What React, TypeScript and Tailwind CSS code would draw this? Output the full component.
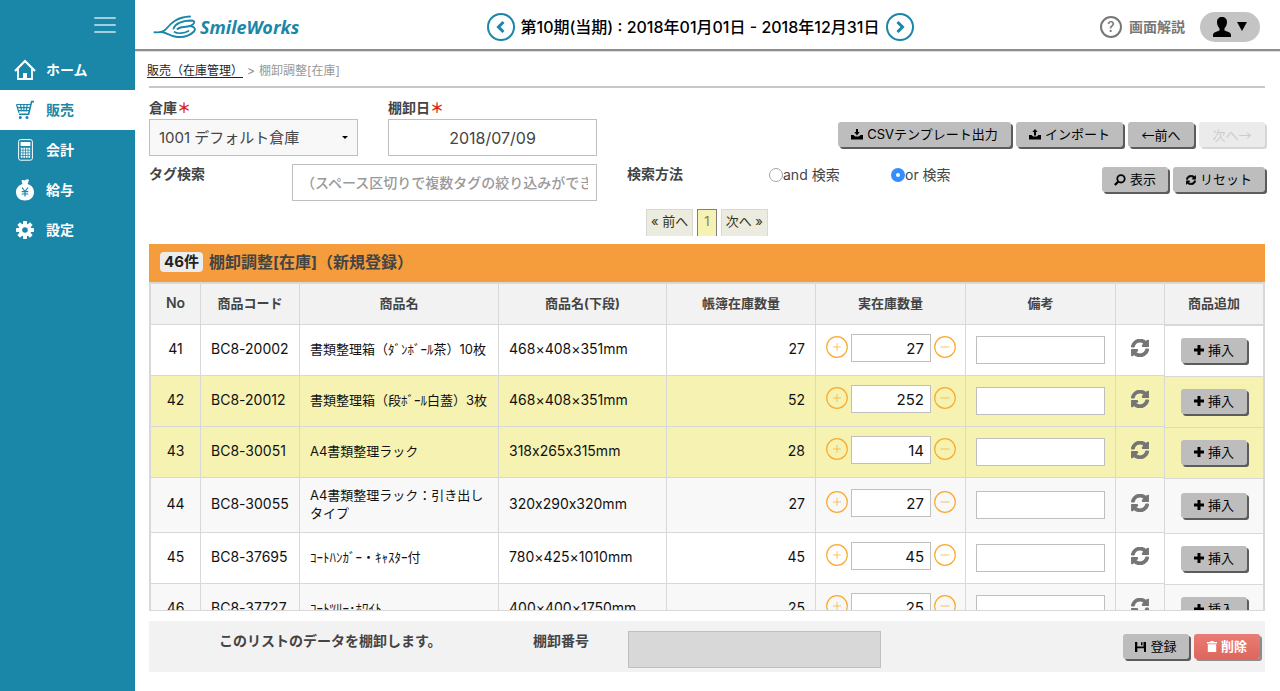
import React from "react";
import { FaSyncAlt } from "react-icons/fa";

type Row = {
  no: number;
  code: string;
  name: string;
  sub: string;
  book: number;
  real: number;
  rowClass: string;
};

const ROWS: Row[] = [
  { no: 41, code: "BC8-20002", name: "書類整理箱（ﾀﾞﾝﾎﾞｰﾙ茶）10枚", sub: "468×408×351mm", book: 27, real: 27, rowClass: "bg-white" },
  { no: 42, code: "BC8-20012", name: "書類整理箱（段ﾎﾞｰﾙ白蓋）3枚", sub: "468×408×351mm", book: 52, real: 252, rowClass: "bg-[#f6f2b2]" },
  { no: 43, code: "BC8-30051", name: "A4書類整理ラック", sub: "318x265x315mm", book: 28, real: 14, rowClass: "bg-[#f6f2b2]" },
  { no: 44, code: "BC8-30055", name: "A4書類整理ラック：引き出しタイプ", sub: "320x290x320mm", book: 27, real: 27, rowClass: "bg-[#f8f8f8]" },
  { no: 45, code: "BC8-37695", name: "ｺｰﾄﾊﾝｶﾞｰ・ｷｬｽﾀｰ付", sub: "780×425×1010mm", book: 45, real: 45, rowClass: "bg-white" },
  { no: 46, code: "BC8-37727", name: "ｺｰﾄﾂﾘｰ･ﾎﾜｲﾄ", sub: "400×400×1750mm", book: 25, real: 25, rowClass: "bg-[#f8f8f8]" },
];

function HomeIcon() {
  return (
    <svg viewBox="0 0 22 22" className="w-[22px] h-[22px]" fill="none" stroke="currentColor" strokeWidth="1.8">
      <path d="M1 12 11 2l10 10" strokeWidth="2.2" />
      <path d="M4 10v10h14V10" />
      <path d="M9 20v-6h4v6z" fill="currentColor" stroke="none" />
    </svg>
  );
}

function CartIcon() {
  return (
    <svg viewBox="0 0 20 20" className="w-5 h-5" fill="none" stroke="currentColor" strokeWidth="1.2">
      <path d="M19 1.600h-2.400L13.600 14.300H4" strokeWidth="1.600" />
      <path d="M1.500 4.500h14M2.300 7.600h12.400M3 10.700h11M1.500 4.500 4 12.800M5.500 4.500l1 7M8.900 4.500v7M12.200 4.500l-1 7" />
      <circle cx="5.300" cy="17.600" r="1.500" fill="currentColor" stroke="none" />
      <circle cx="12" cy="17.600" r="1.500" fill="currentColor" stroke="none" />
    </svg>
  );
}

function CalculatorIcon() {
  return (
    <svg viewBox="0 0 15 22" className="w-[15px] h-[22px]" fill="none" stroke="currentColor">
      <rect x="0.6" y="0.6" width="13.8" height="20.6" rx="2" />
      <rect x="2.6" y="3" width="9.8" height="4" fill="currentColor" stroke="none" />
      <path d="M2.800 9.800h9.400M2.800 12.500h9.400M2.800 15.200h9.400M2.800 17.900h9.400" strokeWidth="1.9" strokeDasharray="1.75 0.8" />
    </svg>
  );
}

function MoneyBagIcon() {
  return (
    <svg viewBox="0 0 18 22" className="w-[18px] h-[22px]">
      <path
        fill="currentColor"
        d="M5.500 1.500C7 .3 7.600 1.700 9 1.200 10.600.500 11.800-.2 13 .9L11.600 5C15.500 6.300 18 9.300 18 13c0 5-3.700 8.500-9 8.500S0 18 0 13c0-3.700 2.600-6.700 6.400-8z"
      />
      <path d="m6 8.500 3 4 3-4M9 12.500v5M5.700 12.700h6.600M5.700 15h6.600" fill="none" stroke="#1a87a9" strokeWidth="1.2" />
    </svg>
  );
}

function GearIcon() {
  return (
    <svg viewBox="-10 -10 20 20" className="w-5 h-5">
      {[0, 45, 90, 135].map((deg) => (
        <rect key={deg} x="-2" y="-9" width="4" height="18" rx="0.8" fill="currentColor" transform={`rotate(${deg})`} />
      ))}
      <circle r="6.400" fill="currentColor" />
      <circle r="2.800" fill="#1a87a9" />
    </svg>
  );
}

function TrayIcon({ up = false }: { up?: boolean }) {
  return (
    <svg viewBox="0 0 12 11" className="w-3 h-[11px]" fill="currentColor">
      <path d="M0 6h2.500l1.700 1.600h3.600L9.500 6H12v4.500H0z" />
      {up ? <path d="M6 0l2.700 3H7v3.500H5V3H3.300z" /> : <path d="M5 0h2v3h1.700L6 6.500 3.300 3H5z" />}
    </svg>
  );
}

function SearchIcon() {
  return (
    <svg viewBox="0 0 12 12" className="w-3 h-3" fill="none" stroke="currentColor" strokeWidth="1.8">
      <circle cx="7" cy="4.800" r="3.700" />
      <path d="M4.300 7.500.9 11" strokeWidth="2.400" />
    </svg>
  );
}

function PlusIcon() {
  return (
    <svg viewBox="0 0 10 10" className="w-2.5 h-2.5" fill="currentColor">
      <path d="M3.500 0h3v3.500H10v3H6.500V10h-3V6.500H0v-3h3.500z" />
    </svg>
  );
}

function SaveIcon() {
  return (
    <svg viewBox="0 0 11 10" className="w-[11px] h-2.5" fill="currentColor">
      <path d="M0 0h2.300v4.500h6.200V0H11v10H9V6.300H2.300V10H0z" />
      <path d="M6 .3h1.500v3H6z" />
    </svg>
  );
}

function TrashIcon() {
  return (
    <svg viewBox="0 0 10 11" className="w-2.5 h-[11px]" fill="currentColor">
      <path d="M3.300 0h3.400v1H10v1.500H0V1h3.300zM.8 3.200h8.400V11H.8z" />
    </svg>
  );
}

function Logo() {
  return (
    <a href="#" className="flex items-center gap-[3px] ml-[13px] text-[#1a87a9]">
      <svg viewBox="0 0 44 24" className="w-11 h-6" fill="none" stroke="currentColor" strokeLinecap="round">
        <path d="M1.500 17.300c5 .4 8.500.2 11.500-3.300C18 8 24 2 37 1.500" strokeWidth="1.900" />
        <path d="M20.500 13.500c2-5 8-7.700 18-8 4.500 0 3 4-1.500 5.500-5 1.500-10 .5-12.500 3" strokeWidth="1.900" />
        <path d="M8 17c4-.5 8 3.800 15 4.800 8 1 14-1.300 18-5.300 2-2.500.5-5-4-5.500" strokeWidth="1.900" />
        <path d="M21.500 17c3 2 9.500 1.500 14-1" strokeWidth="1.700" />
      </svg>
      <span className="font-['Noto_Sans','Open_Sans',sans-serif] text-lg leading-6 font-bold italic">SmileWorks</span>
    </a>
  );
}

const MENU = [
  { label: "ホーム", icon: <HomeIcon /> },
  { label: "販売", icon: <CartIcon />, active: true },
  { label: "会計", icon: <CalculatorIcon /> },
  { label: "給与", icon: <MoneyBagIcon /> },
  { label: "設定", icon: <GearIcon /> },
];

function Sidebar() {
  return (
    <nav className="w-[135px] shrink-0 bg-[#1a87a9] text-white">
      <div className="h-[50px] flex justify-end items-center pr-[19px]">
        <button type="button" aria-label="メニュー" className="flex flex-col gap-[5px]">
          <span className="block w-[22px] h-0.5 rounded bg-white/60" />
          <span className="block w-[22px] h-0.5 rounded bg-white/60" />
          <span className="block w-[22px] h-0.5 rounded bg-white/60" />
        </button>
      </div>
      {MENU.map((m) => (
        <a
          key={m.label}
          href="#"
          className={`h-10 flex items-center pl-3 text-sm font-bold ${m.active ? "bg-white text-[#1a87a9]" : ""}`}
        >
          <span className="w-[34px] pr-2 flex justify-center">{m.icon}</span>
          {m.label}
        </a>
      ))}
    </nav>
  );
}

function ArrowButton({ label, path }: { label: string; path: string }) {
  return (
    <button type="button" aria-label={label} className="w-7 h-7 rounded-full border-2 border-[#1a87a9] text-[#1a87a9] flex items-center justify-center">
      <svg viewBox="0 0 12 14" className="w-3 h-3.5" fill="none" stroke="currentColor" strokeWidth="3">
        <path d={path} />
      </svg>
    </button>
  );
}

function Header() {
  return (
    <header className="h-[51px] shrink-0 flex items-center justify-between pl-[5px] pr-5 pt-1 border-b-2 border-[#8e8e8e] shadow-[0_1px_0_#dddddd]">
      <div className="flex-1">
        <Logo />
      </div>
      <div className="flex items-center gap-1.5 text-base font-medium text-black whitespace-nowrap">
        <ArrowButton label="前の期" path="M8.500 2 3.500 7l5 5" />
        <span>第10期(当期) : 2018年01月01日 - 2018年12月31日</span>
        <ArrowButton label="次の期" path="m3.500 2 5 5-5 5" />
      </div>
      <div className="flex-1 flex items-center justify-end">
        <a href="#" className="flex items-center gap-[7px] text-sm font-bold text-[#777777]">
          <span className="w-[22px] h-[22px] rounded-full border-2 border-[#777777] flex items-center justify-center text-sm leading-none font-medium">?</span>
          画面解説
        </a>
        <button type="button" aria-label="ユーザー" className="ml-[15px] w-[60px] h-[30px] rounded-full bg-[#c4c4c4] text-black flex items-center justify-center gap-1.5">
          <svg viewBox="0 0 18 20" className="w-[18px] h-5" fill="currentColor">
            <path d="M9 0c3 0 5 2 5 5 0 2.500-.9 5-2.500 6.200v2.300l4.500 1.700c1.300.5 2 1.600 2 2.800v2H0v-2c0-1.200.7-2.300 2-2.800l4.500-1.700v-2.300C4.900 10 4 7.500 4 5c0-3 2-5 5-5z" />
          </svg>
          <svg viewBox="0 0 10 9" className="w-2.5 h-[9px]" fill="currentColor">
            <path d="M0 0h10L5 9z" />
          </svg>
        </button>
      </div>
    </header>
  );
}

type ButtonProps = React.ButtonHTMLAttributes<HTMLButtonElement> & { tone?: "gray" | "red" | "off" };

function Button({ tone = "gray", className = "", children, ...rest }: ButtonProps) {
  const tones = {
    gray: "bg-[#bdbdbd] text-black font-normal shadow-[2px_2px_0_#5c5c5c]",
    red: "bg-linear-to-b from-[#e87d75] to-[#de665e] text-white font-bold shadow-[2px_2px_0_#8c8c8c]",
    off: "bg-[#ebebeb] text-[#cccccc] font-normal shadow-[2px_2px_0_#d6d6d6]",
  };
  return (
    <button
      type="button"
      className={`h-[25px] rounded-[3px] flex items-center justify-center gap-1 text-[13px] leading-none whitespace-nowrap ${tones[tone]} ${className}`}
      {...rest}
    >
      {children}
    </button>
  );
}

function SearchForm() {
  return (
    <form className="text-sm text-[#444444]">
      <div className="flex items-start pt-2.5">
        <div className="w-[209px]">
          <label htmlFor="warehouse" className="block h-[21px] leading-5 font-bold">
            倉庫<span className="text-[#d9251c]">＊</span>
          </label>
          <div className="relative">
            <select id="warehouse" className="appearance-none w-full h-[37px] pl-[9px] border border-[#bfbfbf] bg-[#f8f8f8] text-[15px]">
              <option>1001 デフォルト倉庫</option>
            </select>
            <span className="absolute right-2.5 top-[17px] border-x-[3px] border-t-[3px] border-x-transparent border-t-black pointer-events-none" />
          </div>
        </div>
        <div className="w-[209px] ml-[30px]">
          <label htmlFor="date" className="block h-[21px] leading-5 font-bold">
            棚卸日<span className="text-[#d9251c]">＊</span>
          </label>
          <input id="date" type="text" defaultValue="2018/07/09" className="w-full h-[37px] border border-[#bfbfbf] bg-white text-center text-base" />
        </div>
        <div className="ml-auto mt-6 flex gap-[5px]">
          <Button className="w-[173px]">
            <TrayIcon />
            CSVテンプレート出力
          </Button>
          <Button className="w-[107px]">
            <TrayIcon up />
            インポート
          </Button>
          <Button className="w-[66px] font-['Noto_Sans_CJK_JP',sans-serif]">←前へ</Button>
          <Button className="w-[66px] font-['Noto_Sans_CJK_JP',sans-serif]" tone="off" disabled>
            次へ→
          </Button>
        </div>
      </div>

      <div className="flex items-start mt-2">
        <label htmlFor="tag" className="w-[143px] leading-5 font-bold">
          タグ検索
        </label>
        <input
          id="tag"
          type="text"
          placeholder="（スペース区切りで複数タグの絞り込みができます）"
          className="w-[305px] h-[37px] px-2 border border-[#bfbfbf] bg-white font-medium placeholder:text-[#999999]"
        />
        <fieldset className="flex items-start ml-[30px] leading-[22px]">
          <legend className="float-left w-[142px] leading-5 font-bold">検索方法</legend>
          <label className="w-[122px] flex items-center">
            <input type="radio" name="method" className="appearance-none w-3.5 h-3.5 rounded-full border border-[#a6a6a6] bg-white" />
            and 検索
          </label>
          <label className="flex items-center">
            <input
              type="radio"
              name="method"
              defaultChecked
              className="appearance-none w-3.5 h-3.5 rounded-full border-[5px] border-[#338fff] bg-white"
            />
            or 検索
          </label>
        </fieldset>
        <div className="ml-auto mt-[3px] flex gap-[5px]">
          <Button className="w-[66px]">
            <SearchIcon />
            表示
          </Button>
          <Button className="w-[92px]">
            <FaSyncAlt className="w-2.5 h-2.5" stroke="currentColor" strokeWidth="30" />
            リセット
          </Button>
        </div>
      </div>
    </form>
  );
}

function Pager() {
  return (
    <div className="flex justify-center gap-1 py-2 text-[13px] text-[#333311]">
      <a href="#" className="h-[27px] px-1 border border-b-0 border-[#d8d8d4] bg-[#ebebe0] leading-[23px]">« 前へ</a>
      <span className="h-[27px] px-1.5 border border-b-0 border-[#808080] bg-[#f6f2b2] leading-[23px] text-[#808060]">1</span>
      <a href="#" className="h-[27px] px-1 border border-b-0 border-[#d8d8d4] bg-[#ebebe0] leading-[23px]">次へ »</a>
    </div>
  );
}

function StepButton({ minus = false }: { minus?: boolean }) {
  return (
    <button type="button" aria-label={minus ? "減らす" : "増やす"} className="shrink-0 mt-0.5 text-[#f9ab2f]">
      <svg viewBox="0 0 22 22" className="w-[22px] h-[22px]" fill="none" stroke="currentColor">
        <circle cx="11" cy="11" r="10.300" strokeWidth="1.200" />
        <path d={minus ? "M6.500 11h9" : "M7 11h8M11 7v8"} opacity="0.700" />
      </svg>
    </button>
  );
}

function StockTable() {
  return (
    <div className="flex-1 min-h-0 overflow-y-auto [scrollbar-width:none] border-t-2 border-l-2 border-b border-[#d8d8d8]">
      <table className="w-full table-fixed border-separate border-spacing-0 text-[13px] leading-[18px] text-[#111111] [font-feature-settings:'calt'_0] [&_td]:border-r [&_td]:border-[#d8d8d8] [&_th]:border-r [&_th]:border-b [&_th]:border-[#d8d8d8]">
        <colgroup>
          <col className="w-[50px]" />
          <col className="w-[99px]" />
          <col />
          <col className="w-[168px]" />
          <col className="w-[149px]" />
          <col className="w-[150px]" />
          <col className="w-[150px]" />
          <col className="w-[49px]" />
          <col className="w-[100px]" />
        </colgroup>
        <thead>
          <tr className="h-[41px] bg-[#f2f2f2] text-[#444444] [&_th]:pb-0.5">
            <th className="font-semibold text-sm">No</th>
            <th>商品コード</th>
            <th>商品名</th>
            <th>商品名(下段)</th>
            <th>帳簿在庫数量</th>
            <th>実在庫数量</th>
            <th>備考</th>
            <th aria-label="更新" />
            <th className="border-r-2!">商品追加</th>
          </tr>
        </thead>
        <tbody>
          {ROWS.map((r) => (
            <tr key={r.no} className={`h-[51px] ${r.rowClass}`}>
              <td className="border-b pb-0.5 text-center text-sm">{r.no}</td>
              <td className="border-b pl-2.5 pb-0.5 text-sm">{r.code}</td>
              <td className="border-b px-2.5 pt-2 pb-2.5">{r.name}</td>
              <td className="border-b px-2.5 pb-0.5 text-sm">{r.sub}</td>
              <td className="border-b px-2.5 pb-0.5 text-right text-sm">{r.book}</td>
              <td className="border-b px-2.5 pb-1">
                <div className="flex items-start gap-[3px]">
                  <StepButton />
                  <input
                    type="text"
                    aria-label={`実在庫数量 ${r.no}`}
                    defaultValue={r.real}
                    className="w-20 h-7 px-1.5 border border-[#bfbfbf] bg-white text-right text-[15px]"
                  />
                  <StepButton minus />
                </div>
              </td>
              <td className="border-b px-2.5">
                <input type="text" aria-label={`備考 ${r.no}`} className="block w-full h-7 px-1.5 border border-[#bfbfbf] bg-white" />
              </td>
              <td className="border-b pb-1">
                <button type="button" aria-label="元に戻す" className="block mx-auto text-[#757575]">
                  <FaSyncAlt className="w-[18px] h-[18px]" stroke="currentColor" strokeWidth="30" />
                </button>
              </td>
              <td className="border-t border-r-2! pb-0.5">
                <Button className="w-[66px] mx-auto">
                  <PlusIcon />
                  挿入
                </Button>
              </td>
            </tr>
          ))}
        </tbody>
      </table>
    </div>
  );
}

export default function App() {
  return (
    <div className="h-screen flex bg-white font-['Inter','Noto_Sans_CJK_JP',sans-serif]">
      <Sidebar />
      <div className="flex-1 min-w-0 flex flex-col">
        <Header />
        <nav className="h-[35px] shrink-0 pt-1 pl-3 flex items-center text-xs text-[#999999]">
          <a href="#" className="text-[#222222] underline underline-offset-2">販売（在庫管理）</a>
          <span className="mx-1 font-medium">&gt;</span>
          <span>棚卸調整[在庫]</span>
        </nav>

        <main className="flex-1 min-h-0 flex flex-col ml-3.5 mr-[15px] mb-[19px] border-t-2 border-[#c8c8c8]">
          <SearchForm />
          <Pager />

          <h1 className="h-[38px] shrink-0 flex items-center gap-1.5 pl-[11px] pb-0.5 bg-[#f59d3c] text-base font-bold text-[#444444]">
            <span className="h-5 px-1 rounded-sm bg-[#ececec] leading-5 text-[15px] text-[#222222]">46件</span>
            棚卸調整[在庫]（新規登録）
          </h1>
          <StockTable />

          {/* 登録フッター */}
          <div className="mt-2.5 h-[51px] shrink-0 flex items-start bg-[#f2f2f2] pl-[70px] pr-[5px] text-sm font-bold text-[#444444]">
            <span className="w-[314px] mt-2.5 leading-5">このリストのデータを棚卸します。</span>
            <label htmlFor="number" className="w-[95px] mt-2.5 leading-5">棚卸番号</label>
            <input id="number" type="text" disabled className="w-[253px] h-[37px] mt-2.5 border border-[#bfbfbf] bg-[#d8d8d8]" />
            <div className="ml-auto mt-[13px] flex gap-[5px]">
              <Button className="w-[66px]">
                <SaveIcon />
                登録
              </Button>
              <Button className="w-[66px]" tone="red">
                <TrashIcon />
                削除
              </Button>
            </div>
          </div>
        </main>
      </div>
    </div>
  );
}
